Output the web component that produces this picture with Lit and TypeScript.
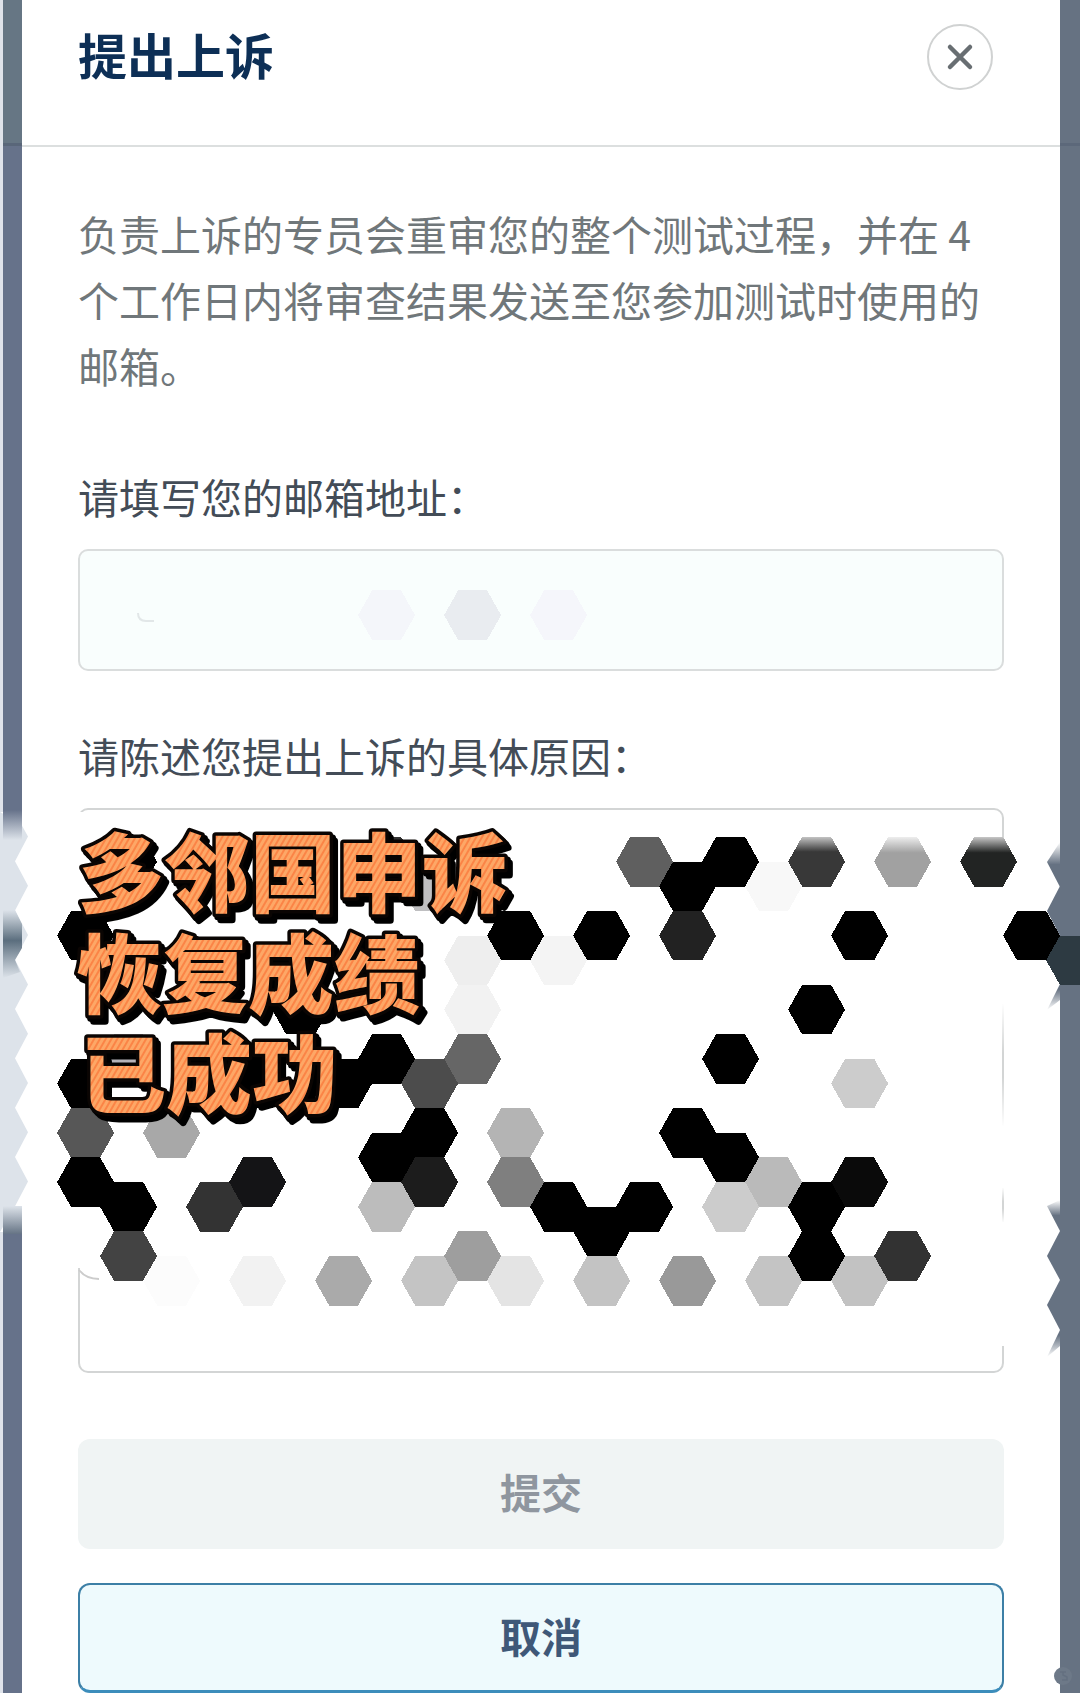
import { LitElement, html, svg, css } from "lit";
import { customElement } from "lit/decorators.js";

type Cell = [column: number, row: number, fill: string];

// Honeycomb geometry: columns are 43 apart, rows step by half a cell.
const ORIGIN_X = 85.6;
const ORIGIN_Y = 861.7;
const STEP_X = 43;
const STEP_Y = 24.65;

const CELLS: Cell[] = [
  [7, -10, "#f4f6fa"], [9, -10, "#e9ecf0"], [11, -10, "#f5f6fb"],
  [1, 0, "#000"], [7, 0, "#333"], [13, 0, "#5f5f5f"], [15, 0, "#000"],
  [17, 0, "url(#fade-dark)"], [19, 0, "url(#fade-gray)"], [21, 0, "url(#fade-ink)"],
  [8, 1, "#bfbfc1"], [16, 1, "#f8f8f8"], [14, 1, "#000"],
  [0, 3, "#000"], [10, 3, "#000"], [12, 3, "#000"], [14, 3, "#222"], [18, 3, "#000"], [22, 3, "#000"],
  [9, 4, "#eeeeee"], [11, 4, "#f4f4f4"], [23, 4, "#2d3a42"],
  [5, 6, "#000"], [9, 6, "#f2f2f2"], [17, 6, "#000"],
  [1, 8, "#b5b2b8"], [7, 8, "#000"], [9, 8, "#666"], [15, 8, "#000"],
  [0, 9, "#000"], [4, 9, "#000"], [6, 9, "#000"], [8, 9, "#4c4c4c"], [18, 9, "#ccc"],
  [0, 11, "#575757"], [2, 11, "#a8a8a8"], [8, 11, "#000"], [10, 11, "#b4b4b4"], [14, 11, "#000"],
  [7, 12, "#000"], [15, 12, "#000"],
  [0, 13, "#000"], [4, 13, "#141416"], [8, 13, "#1c1c1c"], [10, 13, "#7f7f7f"],
  [16, 13, "#bababa"], [18, 13, "#0a0a0a"],
  [1, 14, "#000"], [3, 14, "#333"], [7, 14, "#bcbcbc"], [11, 14, "#000"], [13, 14, "#000"],
  [15, 14, "#ccc"], [17, 14, "#000"],
  [12, 15, "#000"],
  [1, 16, "#434343"], [9, 16, "#9e9e9e"], [17, 16, "#000"], [19, 16, "#323232"],
  [2, 17, "#fcfcfc"], [4, 17, "#f2f2f2"], [6, 17, "#aaa"], [8, 17, "#c4c4c4"], [10, 17, "#e4e4e4"],
  [12, 17, "#c3c3c3"], [14, 17, "#999"], [16, 17, "#c4c4c4"], [18, 17, "#c2c2c2"],
];

const hexagon = ([column, row, fill]: Cell) => {
  const x = ORIGIN_X + column * STEP_X;
  const y = ORIGIN_Y + row * STEP_Y;
  const points = [
    [x - 28.5, y], [x - 14.5, y - 24.8], [x + 14.5, y - 24.8],
    [x + 28.5, y], [x + 14.5, y + 24.8], [x - 14.5, y + 24.8],
  ].map((p) => p.join(",")).join(" ");
  return svg`<polygon points=${points} fill=${fill}></polygon>`;
};

// Right-hand outline of the light strip: a zigzag of half cells.
const zigzag = () => {
  const points = ["0,812", "21,824"];
  for (let i = 0; i < 8; i++) {
    const tip = 836.5 + i * 49.3;
    points.push(`28,${tip}`, `15,${tip + 24.65}`);
  }
  points.push("0,1232");
  return points.join(" ");
};

@customElement("appeal-mosaic")
class AppealMosaic extends LitElement {
  static styles = css`
    :host { display: block; pointer-events: none; }
    .canvas { display: block; width: 100%; height: 100%; }
    .sticker {
      font-family: "Noto Sans CJK SC", sans-serif;
      font-size: 86px;
      font-weight: 900;
      fill: url(#stripes);
      stroke: #0a0503;
      stroke-width: 7px;
      stroke-linejoin: round;
      paint-order: stroke;
      filter: drop-shadow(3px 3px 0 #000) drop-shadow(2px 3px 0 #000);
    }
  `;

  render() {
    return html`
      <svg class="canvas" viewBox="0 0 1080 1693" preserveAspectRatio="xMinYMin meet">
        <defs>
          <pattern id="stripes" width="5" height="5" patternUnits="userSpaceOnUse" patternTransform="rotate(30)">
            <rect width="5" height="5" fill="#fda766"></rect>
            <rect width="2" height="5" fill="#fb8446"></rect>
          </pattern>
          <linearGradient id="fade-dark" x2="0" y2="1">
            <stop offset="0" stop-color="#c4c4c4"></stop><stop offset=".3" stop-color="#383838"></stop>
          </linearGradient>
          <linearGradient id="fade-gray" x2="0" y2="1">
            <stop offset="0" stop-color="#eee"></stop><stop offset=".32" stop-color="#a1a1a1"></stop>
          </linearGradient>
          <linearGradient id="fade-ink" x2="0" y2="1">
            <stop offset="0" stop-color="#c8c8c8"></stop><stop offset=".32" stop-color="#222423"></stop>
          </linearGradient>
          <linearGradient id="bar-end" x2="0" y2="1">
            <stop offset="0" stop-color="#66728a"></stop><stop offset="1" stop-color="#dde3ea"></stop>
          </linearGradient>
          <linearGradient id="bar-spot" x2="0" y2="1">
            <stop offset="0" stop-color="#dde3ea"></stop><stop offset=".45" stop-color="#5b6e7e"></stop>
            <stop offset="1" stop-color="#dde3ea"></stop>
          </linearGradient>
          <linearGradient id="bar-start" x2="0" y2="1">
            <stop offset="0" stop-color="#dde3ea"></stop><stop offset="1" stop-color="#667485"></stop>
          </linearGradient>
          <linearGradient id="edge-in" x2="0" y2="1">
            <stop offset="0" stop-color="#fff"></stop><stop offset=".5" stop-color="#667282"></stop>
          </linearGradient>
          <linearGradient id="edge-out" x2="0" y2="1">
            <stop offset=".2" stop-color="#667282"></stop><stop offset="1" stop-color="#fff"></stop>
          </linearGradient>
          <linearGradient id="line-fade" x2="0" y2="1">
            <stop offset="0" stop-color="#fff"></stop><stop offset=".4" stop-color="#fff" stop-opacity="0"></stop>
            <stop offset=".6" stop-color="#fff" stop-opacity="0"></stop><stop offset="1" stop-color="#fff"></stop>
          </linearGradient>
        </defs>

        <rect x="0" y="812" width="29" height="420" fill="#fff"></rect>
        <polygon points=${zigzag()} fill="#dde3ea"></polygon>
        <rect x="3" y="810" width="19" height="30" fill="url(#bar-end)"></rect>
        <polygon points="3,910 15,910 22,924 22,948 15,960 20,972 3,978" fill="url(#bar-spot)"></polygon>
        <rect x="3" y="1206" width="19" height="28" fill="url(#bar-start)"></rect>

        <polygon points="1060,842 1047,862 1060,887" fill="url(#edge-in)"></polygon>
        <polygon points="1060,886 1047,911 1060,936" fill="#667282"></polygon>
        <polygon points="1060,984 1047,1010 1060,1000" fill="url(#edge-out)"></polygon>
        <polygon points="1060,1200 1047,1206 1060,1231" fill="url(#edge-in)"></polygon>
        <polygon points="1060,1231 1047,1256 1060,1280" fill="#667282"></polygon>
        <polygon points="1060,1280 1047,1305 1060,1330" fill="#667282"></polygon>
        <polygon points="1060,1330 1047,1357 1060,1346" fill="url(#edge-out)"></polygon>

        <rect x="74" y="812" width="9" height="456" fill="#fff"></rect>
        <rect x="998" y="850" width="9" height="154" fill="#fff"></rect>
        <rect x="998" y="1003" width="9" height="124" fill="url(#line-fade)"></rect>
        <rect x="998" y="1126" width="9" height="62" fill="#fff"></rect>
        <rect x="998" y="1187" width="9" height="36" fill="url(#line-fade)"></rect>
        <rect x="998" y="1222" width="9" height="124" fill="#fff"></rect>

        <path d="M138 613q0 8 8 8h8" fill="none" stroke="#e2e7e8" stroke-width="2"></path>
        <path d="M79 1270q7 9 20 9" fill="none" stroke="#ccc" stroke-width="2"></path>

        <g shape-rendering="crispEdges">${CELLS.map(hexagon)}</g>

        <text class="sticker">
          <tspan x="78" y="906">多邻国申诉</tspan>
          <tspan x="76" y="1007">恢复成绩</tspan>
          <tspan x="80" y="1107">已成功</tspan>
        </text>

        <circle cx="1063" cy="1676" r="9" fill="#6d7988"></circle>
        <path d="M1060 1672h6M1063 1672v3l4 2v3h-5" fill="none" stroke="#647080" stroke-width="1.5"></path>
      </svg>
    `;
  }
}

@customElement("app-root")
class AppRoot extends LitElement {
  static styles = css`
    :host {
      display: block;
      position: relative;
      box-sizing: border-box;
      min-height: 100vh;
      padding: 0 20px 0 22px;
      font-family: "Noto Sans CJK SC", sans-serif;
      font-size: 41px;
      line-height: 66px;
      background:
        linear-gradient(#dfe3ea, #dfe3ea) 0 0 / 3px 100% no-repeat,
        linear-gradient(#667684 143px, #596679 143px, #596679 146px, #66728a 146px) 0 0 / 22px 100% no-repeat,
        linear-gradient(#667282 143px, #5c687a 143px, #5c687a 146px, #667282 146px);
    }
    * { box-sizing: border-box; }
    .dialog { background: #fff; }
    .header {
      display: flex;
      align-items: center;
      justify-content: space-between;
      padding: 24px 67px 55px 56px;
      border-bottom: 2px solid #dcdfdf;
    }
    .title {
      margin: 0;
      padding-bottom: 6px;
      font-size: 49px;
      line-height: 60px;
      font-weight: 700;
      color: #0d2f56;
    }
    .close {
      display: grid;
      place-items: center;
      width: 66px;
      height: 66px;
      padding: 0;
      border: 2px solid #d0d2d2;
      border-radius: 50%;
      background: #fff;
    }
    .cross { width: 28px; height: 28px; }
    .form {
      display: flex;
      flex-direction: column;
      padding: 53px 56px 0;
    }
    .intro { margin: 0 0 65px; color: #70777a; }
    .field {
      display: flex;
      flex-direction: column;
      gap: 20px;
      margin-bottom: 51px;
      color: #434c57;
    }
    .reason { margin-bottom: 66px; }
    .box {
      display: block;
      width: 100%;
      margin: 0;
      padding: 24px 32px;
      border: 2px solid #d3d5d5;
      border-radius: 10px;
      font: inherit;
      color: inherit;
      outline: none;
      resize: none;
    }
    .email { height: 122px; background: #f9fefd; border-color: #dadddd; }
    .area { height: 565px; background: #fff; }
    .button {
      height: 110px;
      padding: 0 0 6px;
      border: 0;
      border-radius: 12px;
      font: inherit;
      font-weight: 700;
    }
    .submit { margin-bottom: 34px; background: #f0f4f4; color: #8f969f; }
    .cancel {
      border: 2px solid #3c7fa6;
      border-bottom: 3px solid #3c8dbb;
      background: #eefafd;
      color: #3f5878;
    }
    .overlay { position: absolute; inset: 0; }
  `;

  render() {
    return html`
      <main class="dialog">
        <header class="header">
          <h1 class="title">提出上诉</h1>
          <button class="close" type="button" aria-label="关闭">
            <svg class="cross" viewBox="0 0 28 28" fill="none" stroke="#686e72" stroke-width="4.5" stroke-linecap="round">
              <path d="M4 4l20 20M24 4L4 24"></path>
            </svg>
          </button>
        </header>
        <form class="form">
          <p class="intro">负责上诉的专员会重审您的整个测试过程，并在 4 个工作日内将审查结果发送至您参加测试时使用的邮箱。</p>
          <div class="field">
            <label for="email">请填写您的邮箱地址：</label>
            <input class="box email" id="email" type="email" />
          </div>
          <div class="field reason">
            <label for="reason">请陈述您提出上诉的具体原因：</label>
            <textarea class="box area" id="reason"></textarea>
          </div>
          <button class="button submit" type="submit" disabled>提交</button>
          <button class="button cancel" type="button">取消</button>
        </form>
      </main>
      <appeal-mosaic class="overlay"></appeal-mosaic>
    `;
  }
}
